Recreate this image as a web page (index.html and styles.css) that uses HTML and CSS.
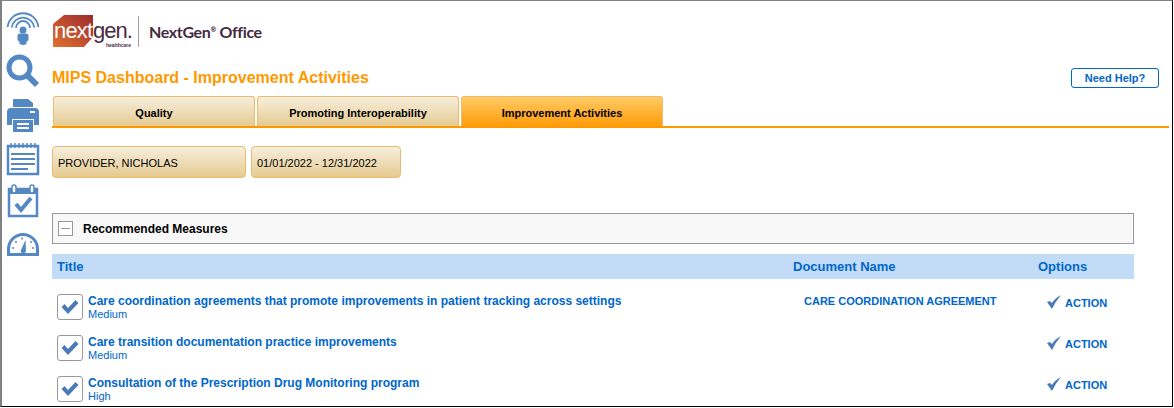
FILE: index.html
```html
<!DOCTYPE html>
<html lang="en">
<head>
    <meta charset="UTF-8">
    <title>MIPS Dashboard - Improvement Activities</title>
    <link rel="stylesheet" href="styles.css">
</head>
<body>

<div class="window">
    <div class="sidebar">
        <svg class="side-icon icon-signal" width="34" height="34" viewBox="0 0 34 34">
            <path d="M1.600 15 A15.500 15.500 0 0 1 32.400 15" fill="none" stroke="#5488c4" stroke-width="1.800"/>
            <path d="M5.700 15.500 A11.400 11.400 0 0 1 28.300 15.500" fill="none" stroke="#5488c4" stroke-width="1.800"/>
            <path d="M10 16 A7 7 0 0 1 24 16" fill="none" stroke="#5488c4" stroke-width="1.800"/>
            <circle cx="17" cy="18" r="3.500" fill="#5488c4"/>
            <path d="M11.500 24 Q11.500 21.500 14 21.500 H20 Q22.500 21.500 22.500 24 V28 L20.500 30 V32 Q17 34 13.500 32 V30 L11.500 28 Z" fill="#5488c4"/>
        </svg>
        <svg class="side-icon icon-search" width="34" height="34" viewBox="0 0 34 34">
            <circle cx="13.500" cy="13.500" r="10.500" fill="none" stroke="#5488c4" stroke-width="5"/>
            <path d="M21 21 L31 31" stroke="#5488c4" stroke-width="6"/>
        </svg>
        <svg class="side-icon icon-print" width="34" height="34" viewBox="0 0 34 34">
            <path d="M7 9 V2 Q7 1 8 1 H22 L27 5 V9 Z" fill="#5488c4"/>
            <path d="M1 14 Q1 10 5 10 H29 Q33 10 33 14 V27 H28 V21 H6 V27 H1 Z" fill="#5488c4"/>
            <rect x="24" y="13" width="5" height="2" fill="#fff"/>
            <path d="M7 22 H27 V34 H7 Z" fill="#5488c4"/>
            <path d="M11 26 H23 M11 30 H23" stroke="#fff" stroke-width="2"/>
        </svg>
        <svg class="side-icon icon-notes" width="34" height="34" viewBox="0 0 34 34">
            <rect x="2" y="4" width="30" height="28" fill="none" stroke="#5488c4" stroke-width="2.500"/>
            <path d="M5 1 V6 M9 1 V6 M13 1 V6 M17 1 V6 M21 1 V6 M25 1 V6 M29 1 V6" stroke="#5488c4" stroke-width="1.500"/>
            <path d="M5 12 H29 M5 17 H29 M5 22 H29 M5 27 H22" stroke="#5488c4" stroke-width="2"/>
        </svg>
        <svg class="side-icon icon-calendar" width="34" height="34" viewBox="0 0 34 34">
            <rect x="3" y="5" width="28" height="27" fill="none" stroke="#5488c4" stroke-width="2.500"/>
            <rect x="3" y="5" width="28" height="5" fill="#5488c4"/>
            <rect x="6" y="1" width="4" height="8" rx="2" fill="#fff" stroke="#5488c4" stroke-width="1.500"/>
            <rect x="24" y="1" width="4" height="8" rx="2" fill="#fff" stroke="#5488c4" stroke-width="1.500"/>
            <path d="M10 20 L15 26 L25 14" fill="none" stroke="#5488c4" stroke-width="4"/>
        </svg>
        <svg class="side-icon icon-gauge" width="34" height="26" viewBox="0 0 34 26">
            <path d="M1 25 V18 A16 16 0 0 1 33 18 V25 Z" fill="#5488c4"/>
            <path d="M4 22 V18 A13 13 0 0 1 30 18 V22 Z" fill="#fff"/>
            <path d="M14.500 20 L19.500 9 L20 20 A2.800 2.800 0 0 1 14.500 20 Z" fill="#5488c4"/>
            <circle cx="7" cy="17" r="1" fill="#5488c4"/>
            <circle cx="10" cy="11" r="1" fill="#5488c4"/>
            <circle cx="16" cy="7.500" r="1" fill="#5488c4"/>
            <circle cx="25" cy="11" r="1" fill="#5488c4"/>
            <circle cx="27" cy="17" r="1" fill="#5488c4"/>
        </svg>
    </div>

    <div class="main">
        <div class="logo-row">
            <div class="logo">
                <svg class="logo-shape" width="42" height="32" viewBox="0 0 42 32">
                    <defs>
                        <linearGradient id="logoFill" x1="0" x2="1" y1="1" y2="0">
                            <stop offset="0" stop-color="#e0722f"/>
                            <stop offset="1" stop-color="#9c2a30"/>
                        </linearGradient>
                    </defs>
                    <path d="M0 9 L11 0 H40 V22 L31 32 H0 Z" fill="url(#logoFill)"/>
                </svg>
                <span class="logo-next">next</span><span class="logo-gen">gen.</span>
                <span class="logo-sub">healthcare</span>
            </div>
            <div class="logo-divider"></div>
            <div class="logo-product">NextGen<sup>®</sup> Office</div>
        </div>

        <div class="title-row">
            <h1>MIPS Dashboard - Improvement Activities</h1>
            <a class="help-button">Need Help?</a>
        </div>

        <div class="tabs">
            <div class="tab">Quality</div>
            <div class="tab">Promoting Interoperability</div>
            <div class="tab active">Improvement Activities</div>
        </div>

        <div class="filters">
            <div class="filter filter-provider">PROVIDER, NICHOLAS</div>
            <div class="filter filter-date">01/01/2022 - 12/31/2022</div>
        </div>

        <div class="section-head">
            <span class="collapse-box"></span>
            <span class="section-title">Recommended Measures</span>
        </div>

        <div class="table-head">
            <div>Title</div>
            <div>Document Name</div>
            <div>Options</div>
        </div>

        <div class="row">
            <span class="check-box">
                <svg width="18" height="16" viewBox="0 0 18 16"><path d="M0.500 8 L7 15 L17.500 4 L14.500 1 L7 9 L3.500 5 Z" fill="#4a7ab8"/></svg>
            </span>
            <div class="measure">
                <div class="measure-name">Care coordination agreements that promote improvements in patient tracking across settings</div>
                <div class="measure-level">Medium</div>
            </div>
            <div class="doc-name">CARE COORDINATION AGREEMENT</div>
            <div class="action">
                <svg width="14" height="14" viewBox="0 0 14 14"><path d="M0 7 L5 14 Q8 7 14 0 Q8 3 5 8 L3 6 Z" fill="#4a7ab8"/></svg>
                ACTION
            </div>
        </div>

        <div class="row">
            <span class="check-box">
                <svg width="18" height="16" viewBox="0 0 18 16"><path d="M0.500 8 L7 15 L17.500 4 L14.500 1 L7 9 L3.500 5 Z" fill="#4a7ab8"/></svg>
            </span>
            <div class="measure">
                <div class="measure-name">Care transition documentation practice improvements</div>
                <div class="measure-level">Medium</div>
            </div>
            <div class="doc-name"></div>
            <div class="action">
                <svg width="14" height="14" viewBox="0 0 14 14"><path d="M0 7 L5 14 Q8 7 14 0 Q8 3 5 8 L3 6 Z" fill="#4a7ab8"/></svg>
                ACTION
            </div>
        </div>

        <div class="row">
            <span class="check-box">
                <svg width="18" height="16" viewBox="0 0 18 16"><path d="M0.500 8 L7 15 L17.500 4 L14.500 1 L7 9 L3.500 5 Z" fill="#4a7ab8"/></svg>
            </span>
            <div class="measure">
                <div class="measure-name">Consultation of the Prescription Drug Monitoring program</div>
                <div class="measure-level">High</div>
            </div>
            <div class="doc-name"></div>
            <div class="action">
                <svg width="14" height="14" viewBox="0 0 14 14"><path d="M0 7 L5 14 Q8 7 14 0 Q8 3 5 8 L3 6 Z" fill="#4a7ab8"/></svg>
                ACTION
            </div>
        </div>
    </div>
</div>

</body>
</html>
```

FILE: styles.css
```css
html, body {
    margin: 0;
    padding: 0;
    height: 408px;
    overflow: hidden;
    background-color: #fff;
}

body {
    font-family: "Liberation Sans", Arial, sans-serif;
}

.window {
    display: flex;
    box-sizing: border-box;
    width: 1173px;
    height: 407px;
    background-color: #fff;
    border-top: 1px solid #808080;
    border-left: 2px solid #808080;
    border-right: 1px solid #000;
    border-bottom: 1px solid #000;
    overflow: hidden;
}

.sidebar {
    display: flex;
    flex-direction: column;
    align-items: flex-start;
    box-sizing: border-box;
    width: 50px;
    padding: 11px 0 0 4px;
    flex-shrink: 0;
}

.side-icon {
    display: block;
    flex-shrink: 0;
}

.icon-search {
    margin-top: 8px;
}

.icon-print {
    margin-top: 10px;
}

.icon-notes {
    margin-top: 10px;
}

.icon-calendar {
    margin-top: 8px;
}

.icon-gauge {
    margin-top: 13px;
}

.main {
    width: 1117px;
    flex-shrink: 0;
}

.logo-row {
    display: flex;
    align-items: center;
    height: 44px;
    padding-top: 8px;
}

.logo {
    position: relative;
    width: 85px;
    height: 32px;
    margin-left: 1px;
}

.logo-shape {
    position: absolute;
    left: 0;
    top: 0;
}

.logo-next {
    position: absolute;
    left: 1px;
    top: 4px;
    font-size: 22px;
    letter-spacing: -0.8px;
    line-height: 24px;
    color: #fff;
}

.logo-gen {
    position: absolute;
    left: 40px;
    top: 4px;
    font-size: 22px;
    letter-spacing: -1px;
    line-height: 24px;
    color: #4a2a42;
}

.logo-sub {
    position: absolute;
    left: 53px;
    top: 28px;
    font-size: 5px;
    font-weight: bold;
    line-height: 5px;
    color: #4a2a42;
}

.logo-divider {
    width: 1px;
    height: 31px;
    background-color: #a89ca4;
}

.logo-product {
    margin-left: 10px;
    font-family: "Lato", sans-serif;
    font-size: 16px;
    font-weight: 700;
    letter-spacing: -0.35px;
    color: #432a3e;
}

.logo-product sup {
    font-size: 7px;
    line-height: 0;
}

.title-row {
    display: flex;
    align-items: center;
    justify-content: space-between;
    width: 1107px;
    height: 20px;
    margin-top: 15px;
}

h1 {
    margin: 0;
    font-size: 16px;
    font-weight: bold;
    color: #ff9900;
}

.help-button {
    box-sizing: border-box;
    width: 88px;
    height: 20px;
    border: 1px solid #0066cc;
    border-radius: 3px;
    font-size: 11px;
    font-weight: bold;
    line-height: 18px;
    text-align: center;
    color: #0066cc;
}

.tabs {
    display: flex;
    gap: 2px;
    width: 1116px;
    height: 30px;
    margin-top: 8px;
    padding-left: 1px;
    border-bottom: 2px solid #ff9900;
}

.tab {
    box-sizing: border-box;
    width: 202px;
    height: 30px;
    border: 1px solid #e9bb6e;
    border-bottom: none;
    border-radius: 3px 3px 0 0;
    background: linear-gradient(#f6efdd, #e6ca90);
    font-size: 11px;
    font-weight: bold;
    line-height: 32px;
    text-align: center;
    color: #000;
}

.tab.active {
    background: linear-gradient(#ffcb66, #ff9c0a);
}

.filters {
    display: flex;
    gap: 5px;
    margin-top: 18px;
}

.filter {
    box-sizing: border-box;
    height: 32px;
    padding-left: 5px;
    border: 1px solid #e9bb6e;
    border-radius: 4px;
    background: linear-gradient(#f6efdd, #e6ca90);
    font-size: 11px;
    line-height: 32px;
    color: #000;
}

.filter-provider {
    width: 194px;
}

.filter-date {
    width: 150px;
}

.section-head {
    display: flex;
    align-items: center;
    box-sizing: border-box;
    width: 1082px;
    height: 31px;
    margin-top: 35px;
    padding-left: 5px;
    border: 1px solid #999;
    background-color: #f8f8f8;
}

.collapse-box {
    position: relative;
    box-sizing: border-box;
    width: 15px;
    height: 15px;
    border: 1px solid #999;
    background-color: #fff;
}

.collapse-box::after {
    content: "";
    position: absolute;
    left: 2px;
    right: 2px;
    top: 6px;
    height: 1px;
    background-color: #999;
}

.section-title {
    margin-left: 10px;
    font-size: 12px;
    font-weight: bold;
    color: #000;
}

.table-head {
    display: grid;
    grid-template-columns: 736px 245px 1fr;
    box-sizing: border-box;
    width: 1082px;
    height: 25px;
    margin-top: 10px;
    padding-left: 5px;
    background-color: #c2dcf7;
    font-size: 13px;
    font-weight: bold;
    line-height: 25px;
    color: #0066cc;
}

.row {
    display: grid;
    grid-template-columns: 31px 716px 243px 1fr;
    box-sizing: border-box;
    width: 1082px;
    height: 41px;
    padding-left: 5px;
    color: #0066cc;
}

.table-head + .row {
    margin-top: 15px;
}

.check-box {
    display: flex;
    align-items: center;
    justify-content: center;
    box-sizing: border-box;
    width: 26px;
    height: 26px;
    border: 1px solid #999;
    border-radius: 3px;
    background-color: #fff;
}

.measure-name {
    font-size: 12px;
    font-weight: bold;
    line-height: 14px;
}

.measure-level {
    font-size: 11px;
    line-height: 13px;
}

.doc-name {
    font-size: 11px;
    font-weight: bold;
    line-height: 14px;
}

.action {
    display: flex;
    align-items: flex-start;
    gap: 4px;
    padding-top: 2px;
    font-size: 11px;
    font-weight: bold;
    line-height: 14px;
}

.action svg {
    margin-top: -1px;
}
```
